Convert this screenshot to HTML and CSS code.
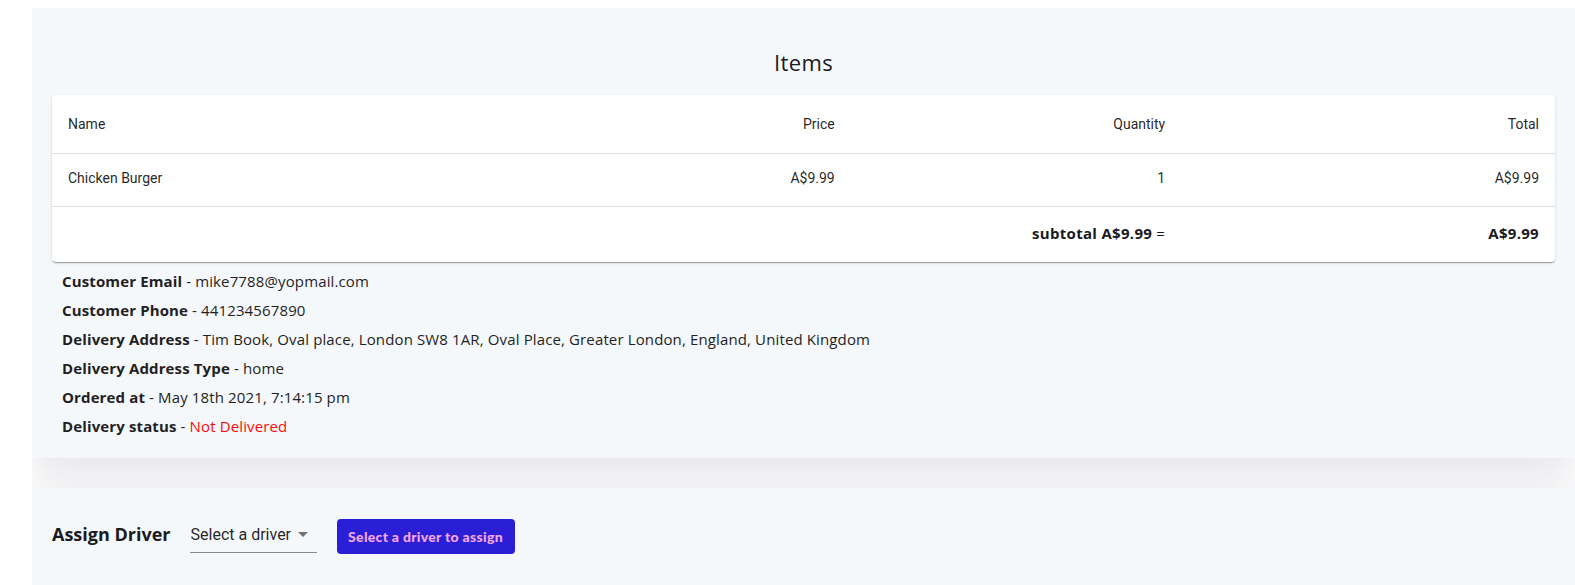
FILE: index.html
```html
<!DOCTYPE html>
<html>
<head>
<meta charset="utf-8">
<link rel="stylesheet" href="styles.css">
</head>
<body>
<section class="card card-items">
  <h2 class="title">Items</h2>
  <div class="paper">
    <table class="table">
      <colgroup>
        <col class="c-name"><col class="c-price"><col class="c-qty"><col class="c-total">
      </colgroup>
      <thead>
        <tr><th class="left">Name</th><th>Price</th><th>Quantity</th><th>Total</th></tr>
      </thead>
      <tbody>
        <tr><td class="left">Chicken Burger</td><td>A$9.99</td><td>1</td><td>A$9.99</td></tr>
      </tbody>
      <tfoot>
        <tr><td></td><td></td><td class="sub">subtotal A$9.99 <span class="eq">=</span></td><td class="sub">A$9.99</td></tr>
      </tfoot>
    </table>
  </div>
  <div class="info">
    <p><b>Customer Email</b> - mike7788@yopmail.com</p>
    <p><b>Customer Phone</b> - 441234567890</p>
    <p><b>Delivery Address</b> - Tim Book, Oval place, London SW8 1AR, Oval Place, Greater London, England, United Kingdom</p>
    <p><b>Delivery Address Type</b> - home</p>
    <p><b>Ordered at</b> - May 18th 2021, 7:14:15 pm</p>
    <p><b>Delivery status</b> - <span class="red">Not Delivered</span></p>
  </div>
</section>
<section class="card card-assign">
  <div class="assign-row">
    <span class="assign-label">Assign Driver</span>
    <div class="select">
      <span class="select-text">Select a driver</span>
      <svg class="arrow" viewBox="0 0 24 24" width="24" height="24"><path d="M7 10l5 5 5-5z"/></svg>
    </div>
    <button class="btn">Select a driver to assign</button>
  </div>
</section>
</body>
</html>
```

FILE: styles.css
```css
html { overflow: hidden; }
html, body { background: #ffffff; }
body {
  margin: 8px 0 0 32px;
  font-family: "Open Sans", "Liberation Sans", sans-serif;
  color: #1f1f24;
}
.card {
  background: #f5f8fb;
  box-shadow: 0 12px 40px rgba(50, 40, 80, 0.14);
}
.card-items {
  padding: 20px 20px 17px;
}
.title {
  margin: 18px 0 17px;
  font-size: 22px;
  line-height: 32px;
  font-weight: 400;
  text-align: center;
  letter-spacing: 0.4px;
  color: #1a1a1f;
}
.paper {
  background: #ffffff;
  border-radius: 4px;
  box-shadow: 0 2px 1px -1px rgba(0,0,0,0.2), 0 1px 1px 0 rgba(0,0,0,0.14), 0 1px 3px 0 rgba(0,0,0,0.12);
  overflow: hidden;
}
.table {
  width: 100%;
  border-collapse: collapse;
  table-layout: fixed;
  font-family: Roboto, "Liberation Sans", sans-serif;
  font-size: 14px;
  color: rgba(0,0,0,0.87);
}
.c-name { width: 450px; }
.c-price { width: 345px; }
.c-qty { width: 329px; }
.c-total { width: 372px; }
.table th, .table td {
  padding: 16px;
  text-align: right;
  border-bottom: 1px solid rgba(224,224,224,1);
}
.table th {
  font-weight: 400;
  line-height: 26px;
}
.table tbody td {
  padding: 14px 16px 18px;
  line-height: 20px;
}
.table .left { text-align: left; }
.table tfoot td {
  border-bottom: none;
  height: 23px;
  line-height: 23px;
  padding: 15px 16px 17px;
}
.table .sub {
  font-family: "Open Sans", "Liberation Sans", sans-serif;
  font-weight: 700;
  font-size: 15px;
  letter-spacing: 0.3px;
  color: #1a1a1f;
}
.table .eq { font-weight: 400; }
.info {
  margin-top: 5px;
  padding: 0 10px;
  font-size: 15px;
  letter-spacing: 0.13px;
}
.info p {
  margin: 0;
  line-height: 29px;
}
.info b { font-weight: 700; }
.red { color: #ff0a0a; }
.card-assign {
  padding: 30px 20px 40px;
  margin-top: 30px;
}
.assign-row {
  display: flex;
  align-items: center;
  height: 35px;
}
.assign-label {
  font-size: 18px;
  font-weight: 700;
  color: #1a1a1f;
  margin-right: 19px;
  margin-top: -3px;
}
.select {
  position: relative;
  width: 127px;
  height: 32px;
  box-sizing: border-box;
  border-bottom: 1px solid #8a8a8a;
  display: flex;
  align-items: center;
  font-family: Roboto, "Liberation Sans", sans-serif;
  font-size: 16px;
  color: rgba(0,0,0,0.87);
  margin-top: 2px;
}
.select-text { padding-left: 1px; margin-top: -4px; }
.arrow {
  position: absolute;
  right: 2px;
  top: 1px;
  fill: rgba(0,0,0,0.54);
}
.btn {
  margin-left: 20px;
  height: 35px;
  width: 178px;
  border: none;
  border-radius: 4px;
  background: #2a1fd6;
  color: #f7a6e9;
  font-family: Lato, "Liberation Sans", sans-serif;
  font-weight: 900;
  font-size: 14px;
  letter-spacing: 0.3px;
  padding: 0;
  margin-top: 2px;
}
```
